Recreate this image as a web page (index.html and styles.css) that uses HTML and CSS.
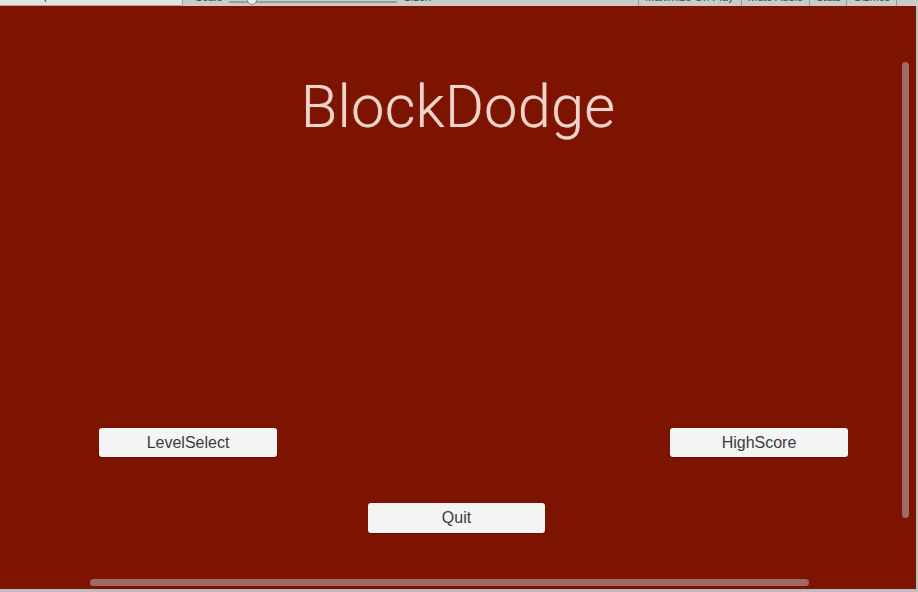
FILE: index.html
```html
<!DOCTYPE html>
<html>
<head>
<meta charset="utf-8">
<link rel="stylesheet" href="styles.css">
</head>
<body>
<div class="toolbar">
  <div class="tb-item tb-aspect">Free Aspect</div>
  <div class="tb-item tb-scale">Scale</div>
  <div class="tb-slider"><span class="tb-knob"></span></div>
  <div class="tb-item tb-zoom">1.25x</div>
  <div class="tb-fill"></div>
  <div class="tb-item tb-btn w-max">Maximize On Play</div>
  <div class="tb-item tb-btn w-mute">Mute Audio</div>
  <div class="tb-item tb-btn w-stats">Stats</div>
  <div class="tb-item tb-btn w-giz">Gizmos</div>
  <div class="tb-end"></div>
</div>
<div class="game">
  <h1 class="title">BlockDodge</h1>
  <div class="row">
    <button class="btn">LevelSelect</button>
    <button class="btn">HighScore</button>
  </div>
  <button class="btn quit">Quit</button>
  <div class="vscroll"></div>
  <div class="hscroll"></div>
</div>
</body>
</html>
```
FILE: styles.css
```css
html, body {
  margin: 0;
  padding: 0;
}
body {
  width: 918px;
  height: 592px;
  background: #bdbdbd;
  overflow: hidden;
  font-family: "Liberation Sans", Arial, sans-serif;
}
.toolbar {
  height: 6px;
  display: flex;
  align-items: flex-end;
  overflow: hidden;
  background: #cbcbcb;
  font-size: 11px;
  color: #444;
}
.tb-item {
  height: 16px;
  line-height: 14px;
  flex: none;
  white-space: nowrap;
}
.tb-aspect {
  width: 176px;
  padding-left: 6px;
  background: #e2e2e2;
  border-right: 1px solid #9a9a9a;
  border-bottom: 1px solid #a8a8a8;
}
.tb-scale {
  margin-left: 12px;
  width: 34px;
}
.tb-slider {
  flex: none;
  width: 168px;
  height: 2px;
  margin-bottom: 3px;
  background: #9c9c9c;
  position: relative;
}
.tb-knob {
  position: absolute;
  left: 18px;
  top: -6px;
  width: 8px;
  height: 8px;
  border-radius: 50%;
  background: #eee;
  border: 1px solid #888;
}
.tb-zoom {
  margin-left: 7px;
  width: 40px;
}
.tb-fill {
  flex: 1;
}
.tb-btn {
  border-left: 1px solid #999;
  padding-left: 6px;
  box-sizing: border-box;
}
.w-max { width: 103px; }
.w-mute { width: 68px; }
.w-stats { width: 37px; }
.w-giz { width: 51px; border-right: 1px solid #999; }
.tb-end {
  flex: none;
  width: 21px;
}
.game {
  position: relative;
  width: 916px;
  height: 583px;
  background: #7c1401;
  display: flex;
  flex-direction: column;
  box-sizing: border-box;
  padding-top: 72px;
}
.title {
  margin: 0;
  text-align: center;
  font-family: Roboto, "Liberation Sans", sans-serif;
  font-weight: 300;
  font-size: 59.5px;
  line-height: 58px;
  color: #f0d3cb;
  letter-spacing: 0.2px;
  text-shadow: 0 0 1px rgba(255, 220, 210, 0.6);
}
.row {
  margin-top: 292px;
  margin-left: 99px;
  width: 749px;
  display: flex;
  justify-content: space-between;
}
.btn {
  width: 178px;
  height: 29px;
  border: none;
  border-radius: 3px;
  background: #f4f4f4;
  color: #3c3c3c;
  font-family: "Liberation Sans", Arial, sans-serif;
  font-size: 16px;
  padding: 0;
  box-shadow: 0 1px 1px rgba(0, 0, 0, 0.15);
}
.quit {
  margin-top: 46px;
  margin-left: 368px;
  width: 177px;
  height: 30px;
}
.vscroll {
  position: absolute;
  left: 902px;
  top: 56px;
  width: 7px;
  height: 456px;
  border-radius: 4px;
  background: #a26863;
}
.hscroll {
  position: absolute;
  left: 90px;
  top: 573px;
  width: 719px;
  height: 7px;
  border-radius: 4px;
  background: #a26863;
}
```
